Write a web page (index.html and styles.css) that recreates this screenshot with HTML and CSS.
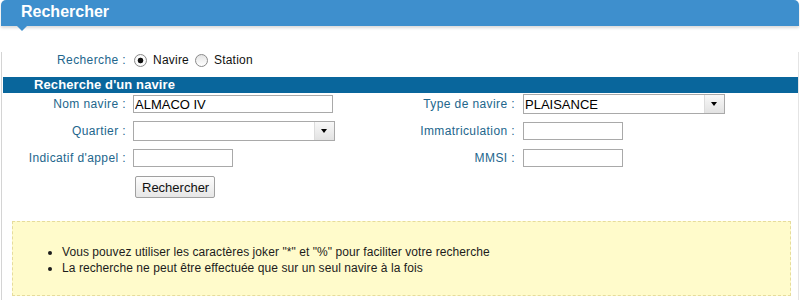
FILE: index.html
```html
<!DOCTYPE html>
<html lang="fr">
<head>
    <meta charset="UTF-8">
    <title>Rechercher</title>
    <link rel="stylesheet" href="styles.css">
</head>
<body>
    <div class="page-title">Rechercher</div>

    <div class="panel">
        <!-- Choix du type de recherche -->
        <div class="mode">
            <span class="label">Recherche :</span>
            <label class="radio"><input type="radio" name="mode" checked> Navire</label>
            <label class="radio"><input type="radio" name="mode"> Station</label>
        </div>

        <div class="section-title">Recherche d'un navire</div>

        <form class="search-form">
            <label class="field-label" for="nom">Nom navire :</label>
            <div><input type="text" id="nom" class="text-wide" value="ALMACO IV"></div>
            <label class="field-label right-label" for="type">Type de navire :</label>
            <div class="combo">
                <select id="type"><option>PLAISANCE</option></select>
                <span class="arrow"></span>
            </div>

            <label class="field-label" for="quartier">Quartier :</label>
            <div class="combo">
                <select id="quartier"><option></option></select>
                <span class="arrow"></span>
            </div>
            <label class="field-label right-label" for="immat">Immatriculation :</label>
            <div><input type="text" id="immat" class="text-small"></div>

            <label class="field-label" for="indicatif">Indicatif d'appel :</label>
            <div><input type="text" id="indicatif" class="text-small"></div>
            <label class="field-label right-label" for="mmsi">MMSI :</label>
            <div><input type="text" id="mmsi" class="text-small"></div>

            <span></span>
            <div class="actions"><button type="submit">Rechercher</button></div>
        </form>

        <div class="help-box">
            <ul>
                <li>Vous pouvez utiliser les caractères joker "*" et "%" pour faciliter votre recherche</li>
                <li>La recherche ne peut être effectuée que sur un seul navire à la fois</li>
            </ul>
        </div>
    </div>
</body>
</html>
```

FILE: styles.css
```css
body {
    margin: 0;
    font-family: "Liberation Sans", Arial, sans-serif;
    font-size: 12px;
    color: #222;
    background: #fff;
}
.page-title {
    position: relative;
    height: 26px;
    margin: 0 1px 0 1px;
    padding-left: 20px;
    background-color: #3e8fcd;
    border-radius: 5px 5px 0 0;
    color: #fff;
    font-weight: bold;
    font-size: 16px;
    line-height: 23px;
    box-shadow: 0 2px 3px rgba(0, 0, 0, 0.15);
}
/* petite pointe sous le titre */
.page-title::after {
    content: "";
    position: absolute;
    left: 16px;
    top: 26px;
    border-left: 5px solid transparent;
    border-right: 5px solid transparent;
    border-top: 5px solid #3e8fcd;
}
.panel {
    margin: 0 1px 0 1px;
    border-left: 1px solid #d4d4d4;
    border-right: 1px solid #e4e4e4;
    padding-bottom: 4px;
}
.label, .field-label {
    color: #22668c;
    letter-spacing: 0.4px;
}
.mode {
    display: flex;
    align-items: center;
    height: 16px;
    margin: 26px 0 9px 0;
    padding-left: 55px;
}
.mode .label {
    margin-right: 8px;
}
.radio {
    display: flex;
    align-items: center;
    margin-right: 6px;
    color: #111;
    letter-spacing: 0.2px;
}
.radio input {
    appearance: none;
    width: 13px;
    height: 13px;
    margin: 0 6px 0 0;
    border: 1px solid #8a8a8a;
    border-radius: 50%;
    background: linear-gradient(#e4e4e4, #fff);
    box-sizing: border-box;
}
.radio input:checked {
    background: radial-gradient(circle, #111 0, #111 2.5px, #fff 3.2px, #ececec 100%);
}
.section-title {
    height: 16px;
    margin-left: 1px;
    padding-left: 31px;
    background-color: #09669c;
    color: #fff;
    font-weight: bold;
    font-size: 13px;
    line-height: 15px;
    letter-spacing: 0.1px;
}
.search-form {
    display: grid;
    grid-template-columns: 131px 257px 133px 1fr;
    grid-template-rows: 20px 20px 20px 23px;
    row-gap: 7px;
    align-items: center;
    margin-top: 1px;
}
.field-label {
    text-align: right;
    padding-right: 7px;
}
.right-label {
    padding-right: 8px;
}
input[type="text"], select {
    font-family: "Liberation Sans", Arial, sans-serif;
    font-size: 13px;
    color: #000;
    border: 1px solid #a9a9a9;
    border-radius: 0;
    box-sizing: border-box;
    margin: 0;
    display: block;
}
input[type="text"] {
    height: 18px;
    padding: 0 1px;
}
.text-wide {
    width: 200px;
}
.text-small {
    width: 100px;
}
.combo {
    position: relative;
    width: 202px;
    height: 20px;
}
.combo select {
    appearance: none;
    width: 100%;
    height: 20px;
    padding: 0 1px;
    background: #fff;
}
.arrow {
    position: absolute;
    top: 1px;
    right: 1px;
    width: 19px;
    height: 18px;
    border-left: 1px solid #dcdcdc;
    background: linear-gradient(#f8f8f8, #e2e2e2);
}
.arrow::after {
    content: "";
    position: absolute;
    left: 6px;
    top: 7px;
    border-left: 3.5px solid transparent;
    border-right: 3.5px solid transparent;
    border-top: 4px solid #000;
}
.actions {
    align-self: end;
    height: 22px;
}
button {
    display: block;
    margin-left: 2px;
    width: 80px;
    height: 22px;
    font-family: "Liberation Sans", Arial, sans-serif;
    font-size: 13px;
    color: #111;
    border: 1px solid #a0a0a0;
    border-radius: 2px;
    background: linear-gradient(#fdfdfd, #e6e6e6);
    cursor: pointer;
}
.help-box {
    margin: 23px 7px 0 10px;
    padding: 22px 0 19px 0;
    border: 1px dashed #e6dc9c;
    background-color: #fffbcb;
}
.help-box ul {
    margin: 0;
    padding-left: 49px;
    line-height: 16px;
    color: #1c1c1c;
    letter-spacing: 0.07px;
}
```
